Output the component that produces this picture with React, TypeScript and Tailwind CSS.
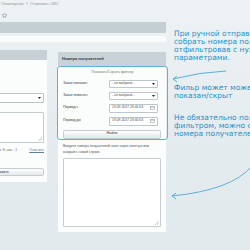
import { Star } from "lucide-react";

const ui = "font-['Liberation_Sans',Arial,sans-serif]";

function Select() {
  return (
    <div className="flex h-[8px] w-[49px] items-center justify-between rounded-[1px] border border-[#bcc5c9] bg-white pl-[2px] pr-[2px]">
      <span className="text-[3.4px] leading-none text-[#444]">- не выбрано -</span>
      <svg width="3" height="2" viewBox="0 0 3 2">
        <path d="M0 0H3L1.5 2Z" fill="#222" />
      </svg>
    </div>
  );
}

function DateInput({ value }: { value: string }) {
  return (
    <div className="flex h-[9px] w-[49px] items-center justify-between rounded-[1px] border border-[#bcc5c9] bg-white pl-[2px] pr-[2px]">
      <span className="text-[3.4px] leading-none text-[#444]">{value}</span>
      <svg width="5" height="4" viewBox="0 0 5 4">
        <rect x="0.5" y="0.5" width="4" height="3" fill="none" stroke="#9aa4a8" strokeWidth="0.6" />
        <path d="M0.5 1.3H4.5" stroke="#9aa4a8" strokeWidth="0.6" />
      </svg>
    </div>
  );
}

function Row({ label, children }: { label: string; children: React.ReactNode }) {
  return (
    <div className="flex items-center justify-between">
      <span className="text-[3.6px] leading-none text-[#333]">{label}</span>
      {children}
    </div>
  );
}

function Resize() {
  return (
    <svg className="absolute bottom-[1px] right-[1px]" width="4" height="4" viewBox="0 0 4 4">
      <path d="M4 0L0 4M4 2L2 4" stroke="#a8b1b5" strokeWidth="0.6" />
    </svg>
  );
}

export default function App() {
  return (
    <div className="relative flex h-[250px] w-[250px] overflow-hidden bg-linear-to-b from-[#eef2f4] via-[#e5ecef] to-[#e1e9ec]">
      {/* screenshot of the page */}
      <div className={`flex w-[166px] shrink-0 flex-col ${ui}`}>
        <div className="flex h-[10px] items-center pl-[1px] text-[3.8px] text-[#8b979c]">
          Оповещения&nbsp;&nbsp;»&nbsp;&nbsp;Отправить СМС
        </div>
        <div className="flex h-[10px] items-center pl-[2px]">
          <Star className="h-[5px] w-[5px] text-[#7f8b90]" strokeWidth={3} />
        </div>
        <div className="mt-[2px] h-[11px] bg-[#c4cfd4]" />
        <div className="mt-[3px] h-[6px] bg-[#f9fbfb]" />

        <div className="mt-[8px] flex items-start">
          {/* left panel, mostly off screen */}
          <div className="ml-[-47px] flex h-[132px] w-[94px] flex-col bg-[#fbfcfc]">
            <div className="h-[10px] bg-[#c7d1d5]" />
            <div className="flex flex-col px-[3px] pt-[33px]">
              <div className="flex h-[10px] items-center justify-end rounded-[1px] border border-[#bcc5c9] bg-white pr-[2px]">
                <svg width="3" height="2" viewBox="0 0 3 2">
                  <path d="M0 0H3L1.5 2Z" fill="#222" />
                </svg>
              </div>
              <div className="relative mt-[9px] h-[31px] rounded-[1px] border border-[#c3cbcf] bg-white">
                <Resize />
              </div>
              <div className="mt-[6px] flex items-center justify-end gap-[12px] text-[3.4px] leading-none">
                <span className="text-[#666]">Символов: 8, смс - 1</span>
                <span className="text-[#5b7f94] underline">Очистить</span>
              </div>
              <div className="mt-[16px] flex h-[8px] items-center justify-center rounded-[2px] border border-[#c5cdd1] bg-linear-to-b from-white to-[#e3e8ea] text-[3.6px] text-[#333]">
                Отправить
              </div>
            </div>
          </div>

          {/* right panel */}
          <div className="ml-[11px] mt-[2px] flex h-[180px] w-[108px] flex-col bg-[#fbfcfc]">
            <div className="flex h-[14px] items-center bg-[#c9d3d7] pl-[4px] text-[4px] font-bold text-[#2f3a3f]">
              Номера получателей
            </div>
            <div className="-ml-[1px] -mr-[2px] flex h-[74px] flex-col rounded-[3px] border-[1.5px] border-[#5fb3d0] px-[5px] pt-[4px]">
              <div className="text-center text-[3.6px] leading-none text-[#6f7a7f]">Показать/Скрыть фильтр</div>
              <div className="mt-[5px] flex flex-col gap-[4px] pr-[4px]">
                <Row label="Заказ оплачен">
                  <Select />
                </Row>
                <Row label="Заказ отменен">
                  <Select />
                </Row>
                <Row label="Период с">
                  <DateInput value="19.09.2017 23:40:53" />
                </Row>
                <Row label="Период до">
                  <DateInput value="19.09.2017 23:40:53" />
                </Row>
              </div>
              <div className="mt-[4px] mr-[1px] flex h-[9px] items-center justify-center rounded-[2px] border border-[#c5cdd1] bg-linear-to-b from-white to-[#e2e7e9] text-[3.8px] text-[#333]">
                Найти
              </div>
            </div>
            <div className="px-[5px] pt-[3px] text-[3.4px] leading-[6px] text-[#555]">
              Введите номера получателей ниже через запятую или
              <br />
              каждый с новой строки.
            </div>
            <div className="relative mx-[5px] mt-[3px] h-[69px] rounded-[1px] border border-[#c5cdd1] bg-white">
              <Resize />
            </div>
          </div>
        </div>
      </div>

      {/* annotations */}
      <div className="flex flex-col whitespace-nowrap pl-[8px] pt-[30px] font-['DejaVu_Sans',sans-serif] text-[7.5px] leading-[8px] text-[#2592c9]">
        <div>При ручной отправке можно</div>
        <div>собрать номера получателей,</div>
        <div>отфильтровав с нужными</div>
        <div>параметрами.</div>
        <div className="mt-[22px]">Фильр может может быть</div>
        <div>показан/скрыт</div>
        <div className="mt-[14px]">Не обязательно пользоваться</div>
        <div>фильтром, можно сразу ввести</div>
        <div>номера получателей</div>
      </div>

      <svg className="pointer-events-none absolute inset-0" width="250" height="250" viewBox="0 0 250 250" fill="none">
        <path d="M226 71 Q200 72 173 79" stroke="#5cb0d6" strokeWidth="1" />
        <path d="M177 76 L173 79 L177 82" stroke="#5cb0d6" strokeWidth="1" />
        <path d="M252 166 Q232 190 172 196" stroke="#5cb0d6" strokeWidth="1" />
        <path d="M176 193 L172 196 L176 199" stroke="#5cb0d6" strokeWidth="1" />
      </svg>
    </div>
  );
}
